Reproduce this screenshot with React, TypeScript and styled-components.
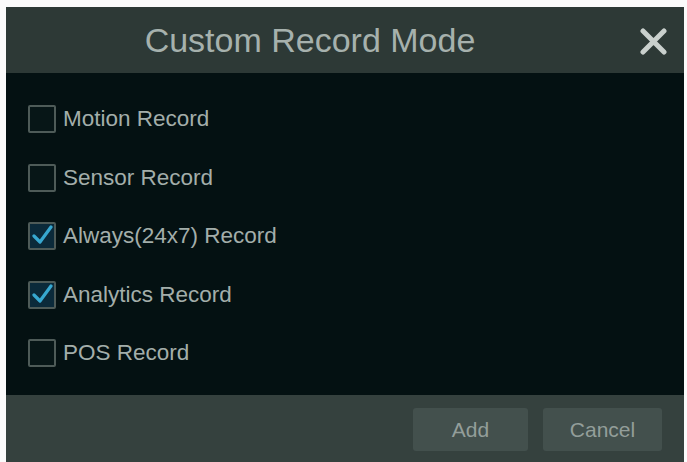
import React from "react";
import styled, { createGlobalStyle } from "styled-components";

const Global = createGlobalStyle`
  html, body { margin: 0; padding: 0; background: #ffffff; }
  body { font-family: "Liberation Sans", Arial, sans-serif; }
`;

const Page = styled.div`
  width: 687px;
  height: 462px;
  padding: 7px 3px 0 6px;
  box-sizing: border-box;
  overflow: hidden;
  background: #fbfbfb;
  font-family: "Liberation Sans", Arial, sans-serif;
`;

const Dialog = styled.div`
  width: 678px;
  display: flex;
  flex-direction: column;
  background: #041112;
`;

const Header = styled.div`
  height: 66px;
  flex: none;
  display: flex;
  align-items: center;
  background: #2d3936;
  position: relative;
`;

const Title = styled.div`
  flex: 1;
  text-align: center;
  padding-right: 70px;
  font-family: "Liberation Sans", Arial, sans-serif;
  font-size: 34px;
  color: #a6b1ad;
`;

const Close = styled.div`
  position: absolute;
  right: 17px;
  top: 21px;
  width: 27px;
  height: 27px;
`;

const Body = styled.div`
  height: 322px;
  flex: none;
  box-sizing: border-box;
  display: flex;
  flex-direction: column;
  padding: 17px 0 0 22px;
`;

const Row = styled.div`
  height: 58.5px;
  display: flex;
  align-items: center;
  gap: 7px;
`;

const Box = styled.div<{ $checked?: boolean }>`
  width: 24px;
  height: 24px;
  border: 2px solid #4e5b58;
  border-radius: 2px;
  background: ${(p) => (p.$checked ? "#0b2a3a" : "#071617")};
  display: flex;
  align-items: center;
  justify-content: center;
`;

const Label = styled.span`
  font-family: "Liberation Sans", Arial, sans-serif;
  font-size: 22.5px;
  color: #a3aeaa;
`;

const Footer = styled.div`
  height: 67px;
  flex: none;
  box-sizing: border-box;
  background: #35413e;
  display: flex;
  justify-content: flex-end;
  align-items: flex-start;
  padding: 13px 22px 0 0;
  gap: 15px;
`;

const Button = styled.div<{ $w: number }>`
  width: ${(p) => p.$w}px;
  height: 43px;
  background: #43504d;
  border-radius: 3px;
  color: #939e9a;
  font-family: "Liberation Sans", Arial, sans-serif;
  font-size: 21px;
  display: flex;
  align-items: center;
  justify-content: center;
`;

const Check = () => (
  <svg width="22" height="22" viewBox="0 0 22 22">
    <path d="M3 11 L9 17 L20 2" stroke="#37a8d0" strokeWidth="3.2" fill="none" strokeLinecap="round" strokeLinejoin="round" />
  </svg>
);

const items: { label: string; checked: boolean }[] = [
  { label: "Motion Record", checked: false },
  { label: "Sensor Record", checked: false },
  { label: "Always(24x7) Record", checked: true },
  { label: "Analytics Record", checked: true },
  { label: "POS Record", checked: false },
];

export default function App() {
  return (
    <>
      <Global />
      <Page>
        <Dialog>
          <Header>
            <Title>Custom Record Mode</Title>
            <Close>
              <svg width="27" height="27" viewBox="0 0 27 27">
                <path d="M3 3 L24 24 M24 3 L3 24" stroke="#c9d0cd" strokeWidth="5" strokeLinecap="round" />
              </svg>
            </Close>
          </Header>
          <Body>
            {items.map((it) => (
              <Row key={it.label}>
                <Box $checked={it.checked}>{it.checked && <Check />}</Box>
                <Label>{it.label}</Label>
              </Row>
            ))}
          </Body>
          <Footer>
            <Button $w={115}>Add</Button>
            <Button $w={119}>Cancel</Button>
          </Footer>
        </Dialog>
      </Page>
    </>
  );
}
